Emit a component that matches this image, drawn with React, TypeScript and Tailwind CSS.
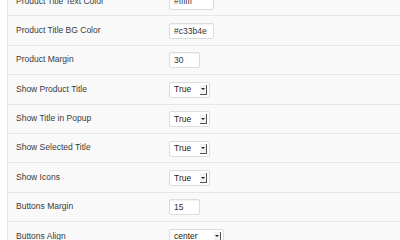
const rows: { label: string; kind: "text" | "select"; value: string; width: number }[] = [
  { label: "Product Title Text Color", kind: "text", value: "#ffffff", width: 45 },
  { label: "Product Title BG Color", kind: "text", value: "#c33b4e", width: 45 },
  { label: "Product Margin", kind: "text", value: "30", width: 31 },
  { label: "Show Product Title", kind: "select", value: "True", width: 41 },
  { label: "Show Title in Popup", kind: "select", value: "True", width: 41 },
  { label: "Show Selected Title", kind: "select", value: "True", width: 41 },
  { label: "Show Icons", kind: "select", value: "True", width: 41 },
  { label: "Buttons Margin", kind: "text", value: "15", width: 31 },
  { label: "Buttons Align", kind: "select", value: "center", width: 55 },
];

function TextField({ value, width }: { value: string; width: number }) {
  return (
    <div
      className="flex h-[16px] items-center rounded-[2px] border border-[#dcdcdc] bg-white pl-[4px] text-[8.5px] text-[#333] shadow-[inset_0_1px_1px_rgba(0,0,0,0.05)]"
      style={{ width }}
    >
      {value}
    </div>
  );
}

function SelectField({ value, width }: { value: string; width: number }) {
  return (
    <div
      className="flex h-[16px] items-center justify-between rounded-[2px] border border-[#dcdcdc] bg-white pl-[4px] pr-[2px] text-[8.5px] text-[#222]"
      style={{ width }}
    >
      <span>{value}</span>
      <span className="flex h-[10px] w-[7px] items-center justify-center border-r border-b border-[#555] bg-[#f2f2f2]">
        <span className="h-0 w-0 border-x-[2px] border-t-[2px] border-x-transparent border-t-[#222]" />
      </span>
    </div>
  );
}

export default function App() {
  return (
    <div className="h-[240px] w-[400px] overflow-hidden bg-white pl-[7px] font-['Liberation_Sans',Arial,sans-serif]">
      <div className="-mt-[13px] border-l border-[#e4e4e4] bg-[#f9f9f9]">
        {rows.map((row) => (
          <div key={row.label} className="flex h-[29.4px] border-b border-[#e6e6e6]">
            <div className="w-[153px] pl-[8px] pt-[8.5px] text-[8.5px] leading-[11px] text-[#3a3a3a]">{row.label}</div>
            <div className="flex items-center pl-[8px] pt-[1px]">
              {row.kind === "text" ? (
                <TextField value={row.value} width={row.width} />
              ) : (
                <SelectField value={row.value} width={row.width} />
              )}
            </div>
          </div>
        ))}
      </div>
    </div>
  );
}
